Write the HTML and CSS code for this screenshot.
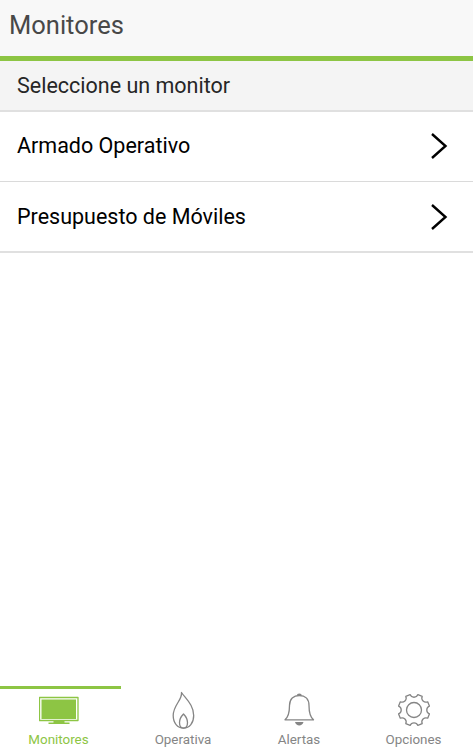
FILE: index.html
```html
<!DOCTYPE html>
<html lang="es">
<head>
    <meta charset="UTF-8">
    <meta name="viewport" content="width=device-width, initial-scale=1.0">
    <title>Monitores</title>
    <link rel="stylesheet" href="styles.css">
</head>
<body>
    <header class="header">
        <h1>Monitores</h1>
    </header>

    <!-- Lista de monitores -->
    <main class="content">
        <h2 class="list-title">Seleccione un monitor</h2>
        <ul class="list">
            <li class="list-item">
                <span>Armado Operativo</span>
                <svg class="arrow" viewBox="0 0 18 28"><path d="M2 2 L15.500 14 L2 26"/></svg>
            </li>
            <li class="list-item">
                <span>Presupuesto de Móviles</span>
                <svg class="arrow" viewBox="0 0 18 28"><path d="M2 2 L15.500 14 L2 26"/></svg>
            </li>
        </ul>
    </main>

    <!-- Barra de navegación -->
    <nav class="tabs">
        <a class="tab tab-monitores active">
            <svg class="icon" viewBox="0 0 40 40">
                <rect x="0.5" y="7.5" width="38.500" height="23"/>
                <path class="fill" d="M2.500 9.500h34.500v19.500h-34.500z M14.500 31h11v1.500h5v1.500H9.500v-1.500h5z"/>
            </svg>
            <span>Monitores</span>
        </a>
        <a class="tab">
            <svg class="icon" viewBox="0 0 40 40">
                <path d="M18.500 2.500C19.500 10 10.200 15 10.200 25.500C10.200 33 14.500 38.100 20.500 38.100C26.500 38.100 30.700 33 30.700 25.500C30.700 15 23 9 18.500 2.500Z"/>
                <path d="M20.500 24C18 26.500 16.500 29.500 16.500 32.500C16.500 36 18 38.100 20.500 38.100C23 38.100 24.500 36 24.500 32.500C24.500 29.500 23 26.500 20.500 24Z"/>
            </svg>
            <span>Operativa</span>
        </a>
        <a class="tab">
            <svg class="icon" viewBox="0 0 40 40">
                <path d="M6 29.800C10 26.500 10.500 22 10.500 15.500C10.500 9 14.500 5.500 20.300 5.500S30 9 30 15.500C30 22 30.500 26.500 34.500 29.800Z"/>
                <path class="fill" d="M17.800 5.500a2.500 2 0 0 1 5 0z M16 32h8.500c-1 4.500-7.500 4.500-8.500 0z"/>
            </svg>
            <span>Alertas</span>
        </a>
        <a class="tab tab-opciones">
            <svg class="icon" viewBox="-20 -20 40 40">
                <circle r="7.500"/>
                <path d="M-3.900 -15.400C-2.500 -11.900 2.500 -11.900 3.900 -15.400L8.200 -13.700C6.700 -10.200 10.200 -6.700 13.700 -8.200L15.400 -3.900C11.900 -2.500 11.900 2.500 15.400 3.900L13.700 8.200C10.200 6.700 6.700 10.200 8.200 13.700L3.900 15.400C2.500 11.900 -2.500 11.900 -3.900 15.400L-8.200 13.700C-6.700 10.200 -10.200 6.700 -13.700 8.200L-15.400 3.900C-11.900 2.500 -11.900 -2.500 -15.400 -3.900L-13.700 -8.200C-10.200 -6.700 -6.700 -10.200 -8.200 -13.700Z"/>
            </svg>
            <span>Opciones</span>
        </a>
    </nav>
</body>
</html>
```
FILE: styles.css
```css
* {
    box-sizing: border-box;
}
body {
    margin: 0;
    height: 100vh;
    display: flex;
    flex-direction: column;
    background: #fff;
    font-family: Roboto, sans-serif;
}

/* Cabecera */
.header {
    height: 61px;
    padding: 10px 9px 0;
    background: #f8f8f8;
    border-bottom: 5px solid #8dc544;
}
h1 {
    margin: 0;
    font-size: 25.5px;
    line-height: 30px;
    font-weight: 400;
    color: #484848;
}

/* Lista */
.content {
    flex: 1;
}
.list-title {
    margin: 0;
    height: 51px;
    padding-left: 17px;
    background: #f4f4f4;
    border-bottom: 2px solid #e0e0e0;
    font-size: 21.5px;
    line-height: 49px;
    font-weight: 400;
    color: #262626;
}
.list {
    margin: 0;
    padding: 0;
    list-style: none;
}
.list-item {
    display: flex;
    align-items: center;
    justify-content: space-between;
    height: 70px;
    padding: 0 25px 1px 17px;
    border-bottom: 1px solid #dadada;
    font-size: 21.5px;
    line-height: 25px;
    color: #000;
}
.list-item span {
    padding-bottom: 1px;
}
.list-item:last-child {
    height: 71px;
    padding-bottom: 0;
    border-bottom: 2px solid #e0e0e0;
}
.arrow {
    width: 18px;
    height: 28px;
    fill: none;
    stroke: #000;
    stroke-width: 2.4;
}

/* Barra inferior */
.tabs {
    display: grid;
    grid-template-columns: 121px 124px 108px 120px;
    height: 62px;
}
.tab {
    display: flex;
    flex-direction: column;
    align-items: center;
    padding-top: 4px;
    border-top: 0 solid #8dc544;
    font-size: 13.4px;
    line-height: 20px;
    color: #858585;
}
.tab-monitores {
    padding: 1px 4px 0 0;
    border-top-width: 3px;
}
.tab-opciones {
    padding-left: 1px;
}
.tab.active {
    color: #8dc544;
}
.icon {
    width: 40px;
    height: 40px;
    fill: none;
    stroke: currentColor;
    stroke-width: 1.3;
    stroke-linejoin: round;
}
.fill {
    fill: currentColor;
    stroke: none;
}
```
